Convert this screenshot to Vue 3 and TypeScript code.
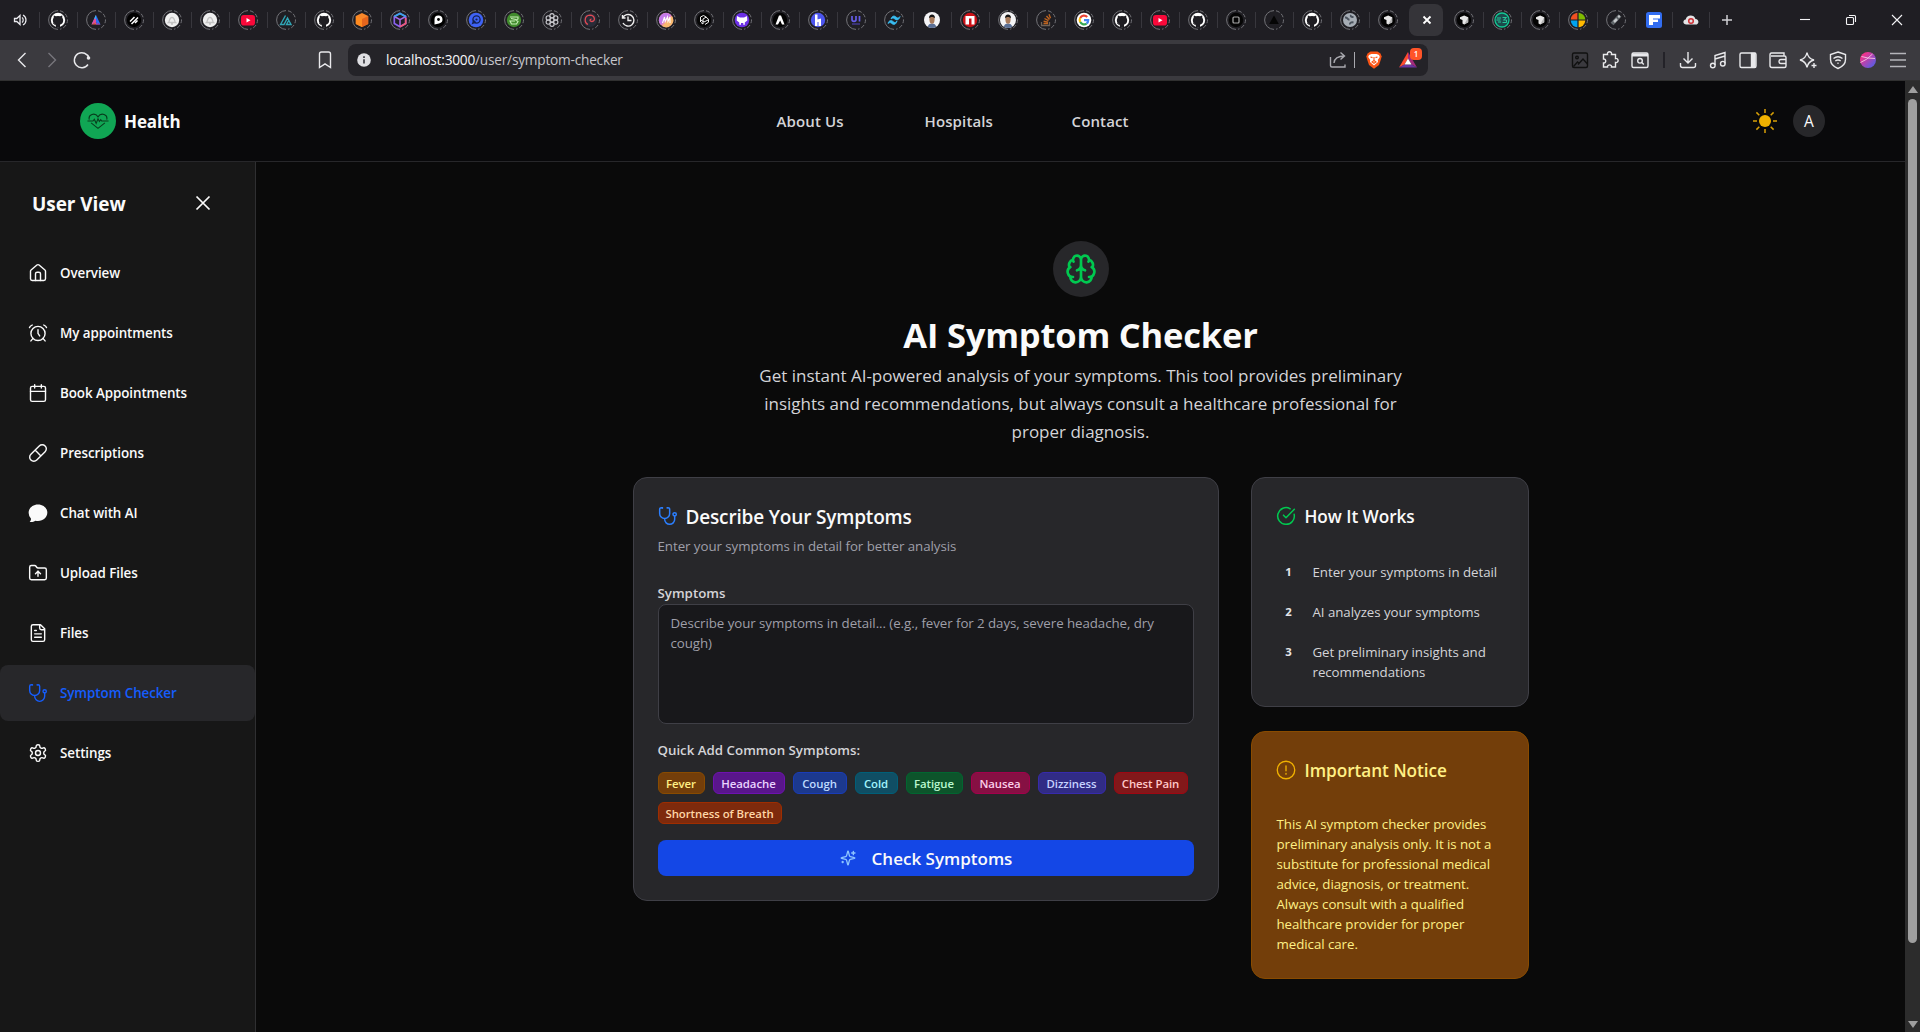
<script setup lang="ts">
interface Tab { icon: string; ring?: boolean; active?: boolean; narrow?: boolean }
interface Chip { label: string; tone: string; width: number }

const github = '<circle cx="10" cy="10" r="7.2" fill="#fff"/><path d="M8 17.300v-2.600c-2-.5-3.200-1.900-3.200-4.400 0-1.100.3-1.900.900-2.600l.1-2.200 2.100.8a8 8 0 0 1 4.200 0l2.100-.8.1 2.200c.6.700.9 1.500.9 2.600 0 2.500-1.200 3.900-3.200 4.400v2.600z" fill="#1f1e23"/><path d="M5.200 13.300c1 .2 1 1.700 3 1.500" stroke="#1f1e23" stroke-width=".9" fill="none"/>'
const youtube = '<rect x="3" y="5" width="14" height="10.500" rx="2.800" fill="#f9093a"/><path d="M8.500 8v4.500l4-2.250z" fill="#fff"/>'
const bell = '<circle cx="10" cy="10" r="7.200" fill="#efefef"/><path d="M6.500 12.500c1.300-1 .6-5 3.500-5.200 2.900.2 2.200 4.200 3.500 5.200zM9 14h2" stroke="#c4c4c4" stroke-width="1.300" fill="none"/>'
const cursor = '<circle cx="10" cy="10" r="7.200" fill="#030303"/><path d="M6 7.300 10.200 5.500l4 1.800v5L10.200 14.500 8.500 13.500V10L6 9z" fill="#e8e8e8"/><path d="m10.200 14.500 4-2.200V7.300z" fill="#b5b5b5"/>'
const portrait = '<circle cx="10" cy="10" r="8" fill="#f4f4f6"/><path d="M5.800 16.800c.5-2.500 2-3.300 4.200-3.300s3.700.8 4.200 3.300A8 8 0 0 1 5.800 16.800z" fill="#5b7096"/><ellipse cx="10" cy="9.500" rx="2.600" ry="4.200" fill="#a87b5c"/><path d="M7 8.500C6.500 3 13.500 3 13 8.500 12 6.500 8 6.500 7 8.500z" fill="#151515"/>'

const favicons: Record<string, string> = {
  speaker: '<path d="M4.500 8.500h2.300l3.200-3v9l-3.200-3H4.500z" fill="none" stroke="#ececf0" stroke-width="1.300"/><path d="M12 7.500c1.600 1.200 1.600 3.800 0 5M13 5c4 2.300 4 7.700 0 10" fill="none" stroke="#ececf0" stroke-width="1.200"/>',
  github, youtube, bell, cursor, portrait,
  prism: '<path d="M10 5 5.500 14.500l4.500-2z" fill="#19a7f5"/><path d="m10 5v7.500l-4.500 2z" fill="#e64a9b"/><path d="m10 5 4.500 9.500-4.500-2z" fill="#2b6df2"/><path d="M8.300 8.600 10 5v4z" fill="#27c0fa"/><path d="m5.500 14.500 4.500-2 4.500 2z" fill="#f4584a"/><path d="m10 12.500 4.500 2H10z" fill="#6a48e0"/>',
  slash: '<circle cx="10" cy="10" r="7.200" fill="#000"/><path d="m6 11.500 4.500-4.500M7.500 14l6.500-6.500M11 13l2.500-2.500" stroke="#fff" stroke-width="1.500"/>',
  delta: '<path d="M9.500 5.500 4.500 14.500h3.500l3.500-6.500 3.500 6.500h-4.500l2.200-4" fill="none" stroke="#30a5b5" stroke-width="1.400"/>',
  orange: '<path d="m10 3 6.200 3v8L10 17l-6.200-3V6z" fill="#f8872a"/><path d="m10 9 6.200-3v8L10 17z" fill="#e5651d"/><path d="m3.800 6 6.200 3v8l-6.200-3z" fill="#ff8b20"/>',
  cube: '<path d="m10 3.500 5.700 3v7L10 16.700l-5.700-3.200v-7z" fill="none" stroke="#8a63ef" stroke-width="1.700"/><path d="M4.300 6.500 10 9.700l5.700-3.200M10 9.700v7" fill="none" stroke="#a868e6" stroke-width="1.500"/><path d="M4.300 6.500 10 3.500l5.700 3" fill="none" stroke="#38a8e8" stroke-width="1.700"/><path d="M15.700 8v5.500L10 16.700" fill="none" stroke="#ef5a78" stroke-width="1.700"/>',
  peer: '<circle cx="10" cy="10" r="7.200" fill="#000"/><path d="M6.500 14.500v-5A4 4 0 1 1 11 13.400z" fill="#fff"/><circle cx="10.500" cy="9.500" r="1.400" fill="#000"/>',
  compass: '<circle cx="10" cy="10" r="7.300" fill="#3f63f5"/><circle cx="10.500" cy="9.500" r="3.600" fill="none" stroke="#142253" stroke-width="1.300"/><path d="M5.500 14.500 7.500 9.500l3 3z" fill="#142253"/><circle cx="10.500" cy="9.500" r="1.100" fill="#142253"/>',
  leaf: '<circle cx="10" cy="10" r="7.200" fill="#418b2d"/><path d="M6 7h8v2l-2 1 2 1.500-1.500 2.500H7.500L6 11h5M7 8.500l5 1" fill="none" stroke="#c8efb8" stroke-width="1.100"/>',
  rosette: '<g fill="none" stroke="#c9c9ce" stroke-width="1.100"><circle cx="10" cy="10" r="2"/><circle cx="10" cy="5.700" r="2.100"/><circle cx="13.800" cy="7.900" r="2.100"/><circle cx="13.800" cy="12.100" r="2.100"/><circle cx="10" cy="14.300" r="2.100"/><circle cx="6.200" cy="12.100" r="2.100"/><circle cx="6.200" cy="7.900" r="2.100"/></g>',
  swirl: '<circle cx="10" cy="10" r="7" fill="#292c38"/><path d="M8 14.500C4 12.500 4 5.500 10 5.200c5 0 5.800 6 2 6.300-2.800 0-2.200-2.600-.5-2.300" fill="none" stroke="#df4a54" stroke-width="1.300"/>',
  history: '<path d="M4.500 5v3h3M4.800 8A5.800 5.800 0 1 1 5 13M10 6.500v4h3.500" fill="none" stroke="#eee" stroke-width="1.400"/>',
  mono: '<circle cx="10" cy="10" r="7.200" fill="#ef8fab"/><path d="M3.200 8A7.200 7.200 0 0 1 15 5L5 15a7 7 0 0 1-1.800-7z" fill="#c47bea"/><path d="M6 16l10-10a7.200 7.200 0 0 1-10 10z" fill="#f8b96f"/><path d="m6.500 13 2-6 .7 4.500 2.300-4.500.5 4.500 2-4.500v6" stroke="#fff" stroke-width="1.100" fill="none"/>',
  knot: '<circle cx="10" cy="10" r="7.200" fill="#060606"/><path d="M6.500 12V7l3-1.500 3 1.700M6 9.500l4 2.500 4-2M9 14V9l3-1.800 2.500 2v3L11 14.500M7 12.500l2 1.500" fill="none" stroke="#f1f1f1" stroke-width="1"/>',
  ghost: '<circle cx="10" cy="10" r="7.300" fill="#6c30e6"/><path d="M5 6 8 7.500h4L15 6l.3 4.500-2.500 2v2.300h-1.500V13H9v1.800H7.300v-2.300L4.700 10.500z" fill="#fff"/>',
  peak: '<circle cx="10" cy="10" r="7.200" fill="#030303"/><path d="m5.500 14.500 3.500-9h2l3.500 9h-2.500l-1.800-4-2.200 4z" fill="#fff"/>',
  chair: '<circle cx="10" cy="10" r="7.200" fill="#4c55ee"/><path d="M7 4.500h2.500v5L13 8.500V16h-2.500v-4h-1v4H7z" fill="#fff"/>',
  uikit: '<path d="M6 6v3.500c0 2.500 4 2.500 4 0V6M13.500 6v5.500" fill="none" stroke="#655de8" stroke-width="1.700"/><path d="M6 14h8" stroke="#443c96" stroke-width="1.400"/>',
  wind: '<path d="M7 9C8 5.500 10.500 5.500 12 7s2.500 1.500 4-.5c-1 4-3.500 4-5.300 2.400C9.500 7.900 8.500 7.700 7 9zM4 13.500c1-3.500 3.500-3.500 5-2s2.500 1.500 4-.5c-1 4-3.500 4-5.300 2.400-1.200-1-2.200-1.200-3.700.1z" fill="#38bdf2" stroke="#38bdf2" stroke-width=".8"/>',
  npm: '<circle cx="10" cy="10" r="7.200" fill="#cc1117"/><path d="M5.500 6h9v8.500h-3V8.500H9v6H5.500z" fill="#fff"/>',
  stack: '<path d="M5.500 12v3.500h8V12" fill="none" stroke="#6e6259" stroke-width="1.300"/><path d="M7.500 13.500h4.500M7.600 11.300l4.500.8M8.500 8.500l4 2.200M10.500 6l3 3.500M13 4.200l1.500 4" stroke="#c0641f" stroke-width="1.400"/>',
  google: '<circle cx="10" cy="10" r="7.300" fill="#fff"/><g fill="none" stroke-width="2.200"><path d="M13.200 7A4.300 4.300 0 0 0 6.200 8" stroke="#ea4335"/><path d="M6.200 8a4.300 4.300 0 0 0 0 4.100" stroke="#fbbc05"/><path d="M6.200 12.100a4.300 4.300 0 0 0 6.500 1.400" stroke="#34a853"/><path d="M12.700 13.500a4.300 4.300 0 0 0 1.500-3.300H10" stroke="#4285f4"/></g>',
  square: '<circle cx="10" cy="10" r="7.200" fill="#050505"/><rect x="7" y="7" width="6" height="6" rx="1" fill="none" stroke="#aaa" stroke-width="1.200"/>',
  triangle: '<path d="m10 5.500 4.800 8.500H5.200z" fill="#050505"/>',
  globe: '<circle cx="10" cy="10" r="7" fill="#a6adb5"/><path d="M5 7.500c2.500-.5 2 2 4.500 2.200M11 5c-1 1.500 1 2 2.500 2M10 14.500c-.5-2 1.500-2.500 3.500-2" fill="none" stroke="#4b535d" stroke-width="1.900"/>',
  circuit: '<circle cx="10" cy="10" r="7" fill="#1c4a4c" stroke="#12c894" stroke-width="1.300"/><path d="M5 8h4M4.500 10h4M6 12h3M10.500 7.500h4l-3 2.500h3v2.500h-4" fill="none" stroke="#2ad5a3" stroke-width=".9"/>',
  windows: '<path d="M9.400 9.400V2.700A7.300 7.300 0 0 0 2.700 9.400z" fill="#f25022"/><path d="M10.600 9.400V2.700a7.300 7.300 0 0 1 6.700 6.700z" fill="#7fba00"/><path d="M9.400 10.600v6.700a7.300 7.300 0 0 1-6.700-6.700z" fill="#00a4ef"/><path d="M10.600 10.600v6.700a7.300 7.300 0 0 0 6.700-6.700z" fill="#ffb900"/>',
  pen: '<path d="m6 14 8-8.500" stroke="#60666a" stroke-width="4"/><path d="m8 12 3-3" stroke="#c6c9cb" stroke-width="2.500"/><circle cx="13" cy="6.500" r="1.200" fill="#c6c9cb"/>',
  form: '<rect x="2" y="2" width="16" height="16" rx="2.500" fill="#326df0"/><path d="M5 5h11v3.500H9v1h5V12H9v3H5z" fill="#fff"/>',
  cloud: '<path d="M5.500 14.500c-4 0-4-4.500-.8-5 .8-5.200 8.500-5.500 9.800-.6 4 .4 3.800 5.600 0 5.600z" fill="#e4e4e6"/><circle cx="10" cy="11" r="2.300" fill="none" stroke="#cf2f34" stroke-width="1.500"/>',
}

const names = [
  'github', 'prism', 'slash', 'bell', 'bell', 'youtube', 'delta', 'github', 'orange', 'cube', 'peer', 'compass',
  'leaf', 'rosette', 'swirl', 'history', 'mono', 'knot', 'ghost', 'peak', 'chair', 'uikit', 'wind', 'portrait',
  'npm', 'portrait', 'stack', 'google', 'github', 'youtube', 'github', 'square', 'triangle', 'github', 'globe',
  'cursor', 'close', 'cursor', 'circuit', 'cursor', 'windows', 'pen', 'form', 'cloud',
]
const tabs: Tab[] = names.map((icon, i) => ({
  icon,
  ring: i !== 23 && icon !== 'form' && icon !== 'cloud' && icon !== 'close',
  active: icon === 'close',
  narrow: icon === 'form' || icon === 'cloud',
}))

const stethoscope = '<path d="M4.800 2.300A.3.300 0 1 0 5 2H4a2 2 0 0 0-2 2v5a6 6 0 0 0 12 0V4a2 2 0 0 0-2-2h-1a.2.200 0 1 0 .3.300M8 15v1a6 6 0 0 0 12 0v-4"/><circle cx="20" cy="10" r="2"/>'
const menu = [
  { label: 'Overview', icon: '<path d="M3 10a2 2 0 0 1 .7-1.500l7-6a2 2 0 0 1 2.600 0l7 6A2 2 0 0 1 21 10v9a2 2 0 0 1-2 2H5a2 2 0 0 1-2-2z"/><path d="M9 21v-8a2 2 0 0 1 2-2h2a2 2 0 0 1 2 2v8"/>' },
  { label: 'My appointments', icon: '<circle cx="12" cy="12.500" r="8.500"/><path d="M12 8v4.500l2 3M1.800 5.500C2.300 4 3.500 3 5 2.500M22.200 5.500C21.700 4 20.500 3 19 2.500M6 18.500l-2.500 3M18 18.500l2.500 3"/>' },
  { label: 'Book Appointments', icon: '<path d="M8 2v4M16 2v4M3 10h18"/><rect x="3" y="4" width="18" height="18" rx="2"/>' },
  { label: 'Prescriptions', icon: '<path d="m10.500 20.500 10-10a4.950 4.950 0 1 0-7-7l-10 10a4.950 4.950 0 1 0 7 7zM8.500 8.500l7 7"/>' },
  { label: 'Chat with AI', icon: '<path d="M12 1.700c6.400 0 11.200 4.300 11.200 9.800S18.400 21.500 12 21.500c-1 0-2 0-3-.3-2 1.300-4.500 2-7 1.500 1.300-1.200 1.700-2.700 1.500-4.200A9.300 9.300 0 0 1 .8 11.500c0-5.500 4.800-9.800 11.200-9.800z" fill="currentColor" stroke="none"/>' },
  { label: 'Upload Files', icon: '<path d="M20 20a2 2 0 0 0 2-2V8a2 2 0 0 0-2-2h-7.900a2 2 0 0 1-1.700-.9L9.600 3.900A2 2 0 0 0 7.900 3H4a2 2 0 0 0-2 2v13a2 2 0 0 0 2 2z"/><path d="M12 9.500v6.500M9 13l3-3 3 3"/>' },
  { label: 'Files', icon: '<path d="M15 2H6a2 2 0 0 0-2 2v16a2 2 0 0 0 2 2h12a2 2 0 0 0 2-2V7zM14 2v4a2 2 0 0 0 2 2h4M10 9H8M16 13H8M16 17H8"/>' },
  { label: 'Symptom Checker', icon: stethoscope, active: true },
  { label: 'Settings', icon: '<path d="M12.220 2h-.44a2 2 0 0 0-2 2v.18a2 2 0 0 1-1 1.730l-.43.250a2 2 0 0 1-2 0l-.15-.08a2 2 0 0 0-2.730.730l-.22.380a2 2 0 0 0 .73 2.730l.15.100a2 2 0 0 1 1 1.720v.510a2 2 0 0 1-1 1.740l-.15.090a2 2 0 0 0-.73 2.730l.22.380a2 2 0 0 0 2.730.730l.15-.08a2 2 0 0 1 2 0l.43.250a2 2 0 0 1 1 1.730V20a2 2 0 0 0 2 2h.440a2 2 0 0 0 2-2v-.18a2 2 0 0 1 1-1.730l.43-.25a2 2 0 0 1 2 0l.15.080a2 2 0 0 0 2.730-.73l.22-.39a2 2 0 0 0-.73-2.730l-.15-.08a2 2 0 0 1-1-1.740v-.5a2 2 0 0 1 1-1.740l.15-.09a2 2 0 0 0 .73-2.730l-.22-.38a2 2 0 0 0-2.730-.73l-.15.080a2 2 0 0 1-2 0l-.43-.25a2 2 0 0 1-1-1.730V4a2 2 0 0 0-2-2z"/><circle cx="12" cy="12" r="3"/>' },
]

const chips: Chip[] = [
  { label: 'Fever', tone: 'yellow', width: 47 },
  { label: 'Headache', tone: 'purple', width: 72 },
  { label: 'Cough', tone: 'blue', width: 54 },
  { label: 'Cold', tone: 'cyan', width: 43 },
  { label: 'Fatigue', tone: 'green', width: 57 },
  { label: 'Nausea', tone: 'pink', width: 59 },
  { label: 'Dizziness', tone: 'indigo', width: 68 },
  { label: 'Chest Pain', tone: 'red', width: 74 },
  { label: 'Shortness of Breath', tone: 'orange', width: 124 },
]
const steps = [['Enter your symptoms in detail'], ['AI analyzes your symptoms'], ['Get preliminary insights and', 'recommendations']]
const notice = [
  'This AI symptom checker provides', 'preliminary analysis only. It is not a', 'substitute for professional medical',
  'advice, diagnosis, or treatment.', 'Always consult with a qualified', 'healthcare provider for proper', 'medical care.',
]
const toolbarIcons = [
  { cls: 'dark', svg: '<rect x="2.500" y="3" width="15" height="14.500" rx="1.500"/><circle cx="7" cy="7.500" r="1.300"/><path d="m3.500 16.500 4-4.500 2 1.500M8 14.500l5-5.500 4.500 5"/>' },
  { cls: 'puzzle', svg: '<path d="M3.500 4.500h4c-1-3.700 5-3.700 4 0h4v4c3.500-.8 3.500 4.800 0 4v4.500h-4c.8-2.800-4.500-2.800-4 0h-4v-4c3 .5 3-4.500 0-4z"/>' },
  { cls: 'find', svg: '<rect x="2" y="3" width="16" height="14.500" rx="1.500"/><path d="M2 5h16" stroke-width="3"/><circle cx="10" cy="10.800" r="2.300"/><path d="m11.800 12.600 2 2"/>' },
  { cls: 'sep', svg: '' },
  { cls: '', svg: '<path d="M10 2v10.500M5.500 8.500 10 13l4.500-4.500M2.500 13v2.500q0 2 2 2h11q2 0 2-2V13"/>' },
  { cls: '', svg: '<path d="M7 15V5.500l10-3v11M7 9l10-3"/><circle cx="4.800" cy="15.500" r="2.300"/><circle cx="14.800" cy="13.700" r="2.300"/>' },
  { cls: '', svg: '<rect x="2" y="3" width="16" height="14.500" rx="1.500"/><path d="M13.500 3.500h3.500v13.500h-3.500z" fill="currentColor"/>' },
  { cls: '', svg: '<path d="M16 6V3H3.500Q2 3 2 5v10.500q0 2 2 2h12.500q1.500 0 1.500-1.500V7.500Q18 6 16.500 6H3M18 9.500h-5q-2 0-2 2t2 2h5"/>' },
  { cls: '', svg: '<path d="M9 2.500q1 6 7 7.500-6 1.500-7 7.500Q8 11.500 2 10 8 8.500 9 2.500zM16 13v5M13.500 15.500h5"/>' },
  { cls: '', svg: '<path d="M10 2l7.500 2.500v5q0 6-7.500 9-7.500-3-7.500-9v-5z"/><path d="M5.500 8.500q4.500-3.500 9 0M7.300 11q2.700-2 5.400 0M9.400 13.300h1.200"/>' },
]
</script>

<template>
  <div class="window">
    <div class="tabstrip">
      <div class="tab first"><svg viewBox="0 0 20 20" v-html="favicons.speaker" /></div>
      <div v-for="(t, i) in tabs" :key="i" class="tab" :class="{ active: t.active, narrow: t.narrow, plain: t.active || tabs[i - 1]?.active }">
        <svg v-if="t.active" viewBox="0 0 20 20"><path d="m6.500 6.500 7 7m0-7-7 7" stroke="#fff" stroke-width="1.800" /></svg>
        <svg v-else viewBox="0 0 20 20">
          <g v-if="t.ring" fill="none" stroke="#737378" stroke-width="1">
            <path d="M10 .6A9.400 9.400 0 0 0 10 19.400" />
            <path d="M12 .8A9.400 9.400 0 0 1 12 19.200" stroke-dasharray="4 2" />
          </g>
          <g v-html="favicons[t.icon]" />
        </svg>
      </div>
      <div class="tab plus"><svg viewBox="0 0 20 20"><path d="M10 5v10M5 10h10" stroke="#d0d0d4" stroke-width="1.500" /></svg></div>
      <div class="controls">
        <svg viewBox="0 0 20 20"><path d="M5 9.500h10" /></svg>
        <svg viewBox="0 0 20 20"><rect x="5.500" y="7.500" width="7" height="7" rx="1" /><path d="M8 5.500h5.500q1 0 1 1V12" /></svg>
        <svg viewBox="0 0 20 20"><path d="m5 5 10 10M15 5 5 15" /></svg>
      </div>
    </div>

    <div class="toolbar">
      <div class="history">
        <svg viewBox="0 0 20 20"><path d="m13.500 3-7 7 7 7" /></svg>
        <svg viewBox="0 0 20 20" class="dim"><path d="m6.500 3 7 7-7 7" /></svg>
        <svg viewBox="0 0 20 20"><path d="M17 8A7.500 7.500 0 1 0 16 14.500" /><circle cx="16.500" cy="8" r="1.800" fill="currentColor" stroke="none" /></svg>
      </div>
      <svg class="bookmark" viewBox="0 0 20 20"><path d="M4.500 4q0-2 2-2h7q2 0 2 2v13.500L10 13.800l-5.500 3.700z" /></svg>
      <div class="address">
        <svg class="info" viewBox="0 0 14 14"><circle cx="7" cy="7" r="6.800" /><path d="M6.200 6.200h1.600v4.300H6.200zM6.200 3.300h1.600v1.600H6.200z" fill="#34343a" /></svg>
        <span class="url"><b>localhost:3000</b>/user/symptom-checker</span>
        <svg class="share" viewBox="0 0 20 20"><path d="M2.500 7v8.500q0 1.500 1.500 1.500h13v-2.500M6 13c.5-5 4-7 10.500-7M12.500 2.500 16.500 6l-4 3.500" /></svg>
        <i class="bar" />
        <svg class="brave" viewBox="0 0 16 18"><path d="m4.500.5-3 2L.3 5.500l1 3.500L3 14l5 3.800L13 14l1.700-5 1-3.500-1.200-3-3-2z" fill="#fb5415" /><path d="m3 4 2.500-1h5L13 4l.8 2-2 3 .2 2-4 3.500L4 11l.2-2-2-3z" fill="#fff" /><path d="m4.500 6 2 .6M11.500 6l-2 .6M8 6v3.500L6 11l2 1.300 2-1.300-2-1.500" fill="none" stroke="#fb5415" stroke-width="1.100" /></svg>
        <div class="bat">
          <svg viewBox="0 0 20 18"><path d="M10 1 1 16.500l5.500-3L10 7.500z" fill="#ff4b2f" /><path d="m10 1 9 15.500-5.500-3L10 7.500z" fill="#a22a7c" /><path d="m1 16.500 5.500-3h7l5.500 3z" fill="#6b35a0" /><path d="m10 7.500-3.500 6h7z" fill="#fff" /></svg>
          <span>1</span>
        </div>
      </div>
      <div class="actions">
        <template v-for="(t, i) in toolbarIcons" :key="i">
          <i v-if="t.cls === 'sep'" />
          <svg v-else :class="t.cls" viewBox="0 0 20 20" v-html="t.svg" />
        </template>
        <svg viewBox="0 0 20 20" class="orb">
          <defs><linearGradient id="orb" x1="0" y1="0" x2="1" y2="1"><stop offset=".2" stop-color="#f0338c" /><stop offset=".8" stop-color="#6858dc" /></linearGradient></defs>
          <circle cx="10" cy="10" r="8" fill="url(#orb)" stroke="none" /><path d="M3.500 6.500q6 2 13.500 2M2.500 12.500Q9 10 14.500 4" stroke="#f3b8df" stroke-width="1" />
        </svg>
        <svg viewBox="0 0 20 20" class="burger"><path d="M2 3.500h16M2 10h16M2 16.500h16" /></svg>
      </div>
    </div>

    <div class="viewport">
      <div class="page">
        <header>
          <div class="brand">
            <span class="logo"><svg viewBox="0 0 24 18"><path d="M2.500 7C1 1.500 8.500-1.500 12 4c3.500-5.500 11-2.500 9.500 3M4.500 10.500l7.500 6 7.500-6M.5 8.500h6l1.500-2 2 4.500 2-5 1.500 3 1.500-2 1 1.500h7.500" /></svg></span>
            <strong>Health</strong>
          </div>
          <nav><a class="n1">About Us</a><a class="n2">Hospitals</a><a class="n3">Contact</a></nav>
          <div class="account">
            <svg viewBox="0 0 24 24"><circle cx="12" cy="12" r="6" fill="#f0b100" /><path d="M12 0v4M12 20v4M0 12h4M20 12h4M3.400 3.400 6.300 6.300M17.700 17.700l2.900 2.900M3.400 20.600l2.900-2.900M17.700 6.300l2.900-2.900" stroke="#d79f07" stroke-width="1.500" /></svg>
            <span>A</span>
          </div>
        </header>
        <div class="body">
          <aside>
            <div class="side-head">
              <h2>User View</h2>
              <svg viewBox="0 0 24 24"><path d="m5.500 5.500 13 13M18.500 5.500l-13 13" /></svg>
            </div>
            <ul>
              <li v-for="m in menu" :key="m.label" :class="{ active: m.active }">
                <svg viewBox="0 0 24 24" v-html="m.icon" /><span>{{ m.label }}</span>
              </li>
            </ul>
          </aside>
          <main>
            <div class="brain">
              <svg viewBox="0 0 24 24"><path d="M12 18V5M15 13a4.170 4.170 0 0 1-3-4 4.170 4.170 0 0 1-3 4M17.598 6.500A3 3 0 1 0 12 5a3 3 0 1 0-5.598 1.500M17.997 5.125a4 4 0 0 1 2.526 5.770M18 18a4 4 0 0 0 2-7.464M19.967 17.483A4 4 0 1 1 12 18a4 4 0 1 1-7.967-.517M6 18a4 4 0 0 1-2-7.464M6.003 5.125a4 4 0 0 0-2.526 5.770" /></svg>
            </div>
            <h1>AI Symptom Checker</h1>
            <p class="lead">Get instant AI-powered analysis of your symptoms. This tool provides preliminary<br>insights and recommendations, but always consult a healthcare professional for<br>proper diagnosis.</p>
            <div class="columns">
              <section class="card form">
                <h3 class="form-title"><svg viewBox="0 0 24 24" v-html="stethoscope" />Describe Your Symptoms</h3>
                <p class="hint">Enter your symptoms in detail for better analysis</p>
                <label>Symptoms</label>
                <div class="textarea">Describe your symptoms in detail... (e.g., fever for 2 days, severe headache, dry<br>cough)</div>
                <p class="quick">Quick Add Common Symptoms:</p>
                <div class="chips">
                  <span v-for="c in chips" :key="c.label" :class="c.tone" :style="{ width: c.width + 'px' }">{{ c.label }}</span>
                </div>
                <button>
                  <svg viewBox="0 0 24 24"><path d="M9.900 15.500A2 2 0 0 0 8.500 14.100L2.400 12.500a.5.500 0 0 1 0-1L8.500 9.900A2 2 0 0 0 9.900 8.500l1.600-6.100a.5.500 0 0 1 1 0l1.600 6.100a2 2 0 0 0 1.400 1.400l6.100 1.600a.5.500 0 0 1 0 1l-6.100 1.600a2 2 0 0 0-1.400 1.400l-1.600 6.100a.5.500 0 0 1-1 0zM20 2v5M22.500 4.500h-5M4 17v2M5 18H3" /></svg>
                  <span>Check Symptoms</span>
                </button>
              </section>
              <div class="right">
                <section class="card how">
                  <h3><svg viewBox="0 0 24 24"><path d="M21.801 10A10 10 0 1 1 17 3.335M9 11l3 3L22 4" /></svg><span>How It Works</span></h3>
                  <div v-for="(s, i) in steps" :key="i" class="step">
                    <b>{{ i + 1 }}</b>
                    <div><p v-for="line in s" :key="line">{{ line }}</p></div>
                  </div>
                </section>
                <section class="card notice">
                  <h3><svg viewBox="0 0 24 24"><circle cx="12" cy="12" r="10.500" /><path d="M12 7v6M12 16v1" /></svg><span>Important Notice</span></h3>
                  <p v-for="line in notice" :key="line">{{ line }}</p>
                </section>
              </div>
            </div>
          </main>
        </div>
      </div>
      <div class="scrollbar"><i class="up" /><i class="thumb" /><i class="down" /></div>
    </div>
  </div>
</template>

<style>
body { margin: 0; background: #0a0a0a; overflow: hidden; }
</style>

<style scoped>
* { box-sizing: border-box; }
h1, h2, h3, p, ul { margin: 0; padding: 0; }
svg { display: block; fill: none; flex: none; }
.window { width: 1920px; height: 1032px; display: flex; flex-direction: column; font-family: "Open Sans", "Noto Sans", sans-serif; color: #fafafa; overflow: hidden; }

.tabstrip { height: 40px; background: #1f1e23; display: flex; align-items: center; flex: none; }
.tab { width: 38px; height: 16px; display: flex; align-items: center; justify-content: center; border-left: 1px solid #38373d; flex: none; padding-right: 1px; }
.tab svg { width: 20px; height: 20px; }
.tab.first { width: 39px; border: 0; padding: 0; }
.tab.narrow { width: 37px; }
.tab.plain { border-color: transparent; }
.tab.active { width: 34px; margin: 0 2px; height: 32px; background: #353439; border: 0; border-radius: 8px; padding: 0 0 0 1px; }
.tab.plus { width: 36px; padding: 0 1px 0 0; }
.controls { display: flex; gap: 26px; margin-left: 50px; }
.controls svg { width: 20px; height: 20px; stroke: #f4f4f6; stroke-width: 1.1; }

.toolbar { height: 41px; background: #3b3a3f; border-bottom: 1px solid #303030; display: flex; align-items: center; flex: none; color: #e9e9ec; }
.toolbar svg { stroke: currentColor; stroke-width: 1.4; }
.history { display: flex; gap: 10px; padding-left: 12px; width: 315px; }
.history svg, .bookmark { width: 20px; height: 20px; }
.history .dim { color: #77767c; }
.address { margin-left: 13px; width: 1080px; height: 32px; background: #242328; border-radius: 8px; display: flex; align-items: center; }
.toolbar .info { width: 14px; height: 14px; margin-left: 9px; fill: #dfdfe3; stroke: none; }
.url { margin-left: 15px; flex: 1; font-size: 13.7px; letter-spacing: -0.23px; line-height: 20px; color: #c6c6cb; }
.url b { font-weight: 400; color: #f6f6f8; }
.share { width: 20px; height: 20px; color: #a9a9af; }
.bar { width: 1px; height: 16px; background: #a9a9af; margin-left: 6px; }
.toolbar .brave { width: 16px; height: 18px; margin-left: 11px; stroke: none; }
.bat { position: relative; margin: 0 10px 0 16px; }
.toolbar .bat svg { width: 20px; height: 18px; stroke: none; }
.bat span { position: absolute; left: 12px; top: -3px; width: 12px; height: 12px; border-radius: 4px; background: #ff5428; color: #fff; font-size: 8px; line-height: 12px; text-align: center; font-weight: 600; }
.actions { display: flex; align-items: center; gap: 10px; margin-left: 142px; }
.actions svg { width: 20px; height: 20px; }
.actions .dark { color: #111; }
.actions i { width: 2px; height: 16px; background: #232228; margin: 0 3px; }
.burger { color: #b5b5ba; }

.viewport { flex: 1; display: flex; min-height: 0; }
.page { width: 1905px; display: flex; flex-direction: column; }
header { height: 81px; background: #09090b; border-bottom: 1px solid #27272a; display: flex; align-items: center; flex: none; padding: 0 80px; justify-content: space-between; }
.brand { display: flex; align-items: center; gap: 8px; width: 200px; }
.logo { width: 36px; height: 36px; border-radius: 50%; background: #10a654; display: flex; align-items: center; justify-content: center; }
.logo svg { width: 22px; height: 17px; stroke: #083c1d; stroke-width: 1.2; }
.brand strong { font-size: 17px; line-height: 28px; padding-top: 2px; letter-spacing: -0.1px; }
nav { display: flex; font-weight: 600; font-size: 15px; letter-spacing: 0.13px; line-height: 24px; color: #d4d4d8; }
nav a { white-space: nowrap; }
nav .n1 { width: 148px; }
nav .n2 { width: 147px; }
nav .n3 { width: 57px; }
.account { width: 200px; display: flex; gap: 16px; align-items: center; justify-content: flex-end; }
.account svg { width: 24px; height: 24px; }
.account span { width: 32px; height: 32px; border-radius: 50%; background: #27272a; display: flex; align-items: center; justify-content: center; font-size: 15.500px; }

.body { flex: 1; display: flex; min-height: 0; }
aside { width: 256px; background: #171717; border-right: 1px solid #2f2f31; flex: none; }
.side-head { height: 83px; display: flex; justify-content: space-between; padding: 29px 40px 0 32px; }
h2 { font-size: 19px; letter-spacing: -0.07px; line-height: 26px; font-weight: 700; }
.side-head svg { width: 24px; height: 24px; stroke: #fafafa; stroke-width: 1.7; }
ul { list-style: none; }
li { height: 56px; margin-bottom: 4px; border-radius: 8px; padding-left: 28px; display: flex; align-items: center; gap: 12px; font-size: 13.4px; letter-spacing: -0.08px; line-height: 20px; font-weight: 600; }
li svg { width: 20px; height: 20px; stroke: currentColor; stroke-width: 1.7; stroke-linecap: round; stroke-linejoin: round; }
li.active { background: #27272a; color: #155dfc; }

main { flex: 1; background: #0a0a0a; padding-top: 79px; display: flex; flex-direction: column; align-items: center; }
.brain { width: 56px; height: 56px; border-radius: 50%; background: #27272a; display: flex; align-items: center; justify-content: center; }
.brain svg { width: 32px; height: 32px; stroke: #00c950; stroke-width: 2; stroke-linecap: round; stroke-linejoin: round; }
h1 { margin-top: 18px; font-size: 34.500px; letter-spacing: -0.2px; line-height: 40px; font-weight: 700; white-space: nowrap; }
.lead { margin-top: 7px; text-align: center; font-size: 17px; line-height: 28px; color: #d4d4d8; white-space: nowrap; }
.columns { margin-top: 31px; display: flex; gap: 32px; width: 896px; align-items: flex-start; }
.card { background: #27272a; border: 1px solid #3f3f46; border-radius: 14px; padding: 24px; }
.form { width: 586px; height: 424px; flex: none; }
.right { width: 278px; display: flex; flex-direction: column; gap: 24px; }
h3 { display: flex; align-items: center; gap: 8px; font-size: 19px; line-height: 30px; font-weight: 600; color: #fafafa; white-space: nowrap; }
h3 svg { width: 20px; height: 20px; stroke-linecap: round; stroke-linejoin: round; stroke-width: 1.8; }
.form-title { letter-spacing: -0.17px; }
.form-title svg { stroke: #2b7fff; margin-top: -3px; }
.hint { margin-top: 4px; font-size: 13.3px; letter-spacing: -0.05px; line-height: 20px; color: #9f9fa9; }
label { display: block; margin-top: 27px; font-size: 13.3px; line-height: 20px; font-weight: 600; color: #d4d4d8; }
.textarea { margin-top: 1px; height: 120px; background: #18181b; border: 1px solid #3f3f46; border-radius: 8px; padding: 8px 12px; font-size: 13.3px; letter-spacing: -0.06px; line-height: 20px; color: #9f9fa9; white-space: nowrap; }
.quick { margin-top: 16px; font-size: 13.3px; line-height: 20px; font-weight: 600; color: #d4d4d8; }
.chips { margin-top: 12px; display: flex; flex-wrap: wrap; gap: 8px; }
.chips span { height: 22px; border: 1px solid; border-radius: 6px; font-size: 11.400px; letter-spacing: -0.05px; padding-left: 0; line-height: 21px; font-weight: 600; text-align: center; white-space: nowrap; }
.chips .yellow { background: #733e0a; border-color: #894b00; color: #fff085; }
.chips .purple { background: #59168b; border-color: #6e11b0; color: #e9d4ff; }
.chips .blue { background: #1c398e; border-color: #193cb8; color: #bedbff; }
.chips .cyan { background: #104e64; border-color: #005f78; color: #a2f4fd; }
.chips .green { background: #0d542b; border-color: #016630; color: #b9f8cf; }
.chips .pink { background: #861043; border-color: #a3004c; color: #fccee8; }
.chips .indigo { background: #312c85; border-color: #372aac; color: #c6d2ff; }
.chips .red { background: #82181a; border-color: #9f0712; color: #ffc9c9; }
.chips .orange { background: #7e2a0c; border-color: #9f2d00; color: #ffd6a7; }
button { margin-top: 16px; width: 100%; height: 36px; border: 0; border-radius: 8px; background: #1447e6; color: #fafafa; font: 600 17px/28px "Open Sans", "Noto Sans", sans-serif; display: flex; align-items: center; justify-content: center; gap: 16px; padding: 0 0 0 1px; }
button span { padding-top: 1px; }
button svg { width: 16px; height: 16px; stroke: #8ec5ff; stroke-width: 2; stroke-linecap: round; stroke-linejoin: round; }
.how { height: 230px; }
.how h3, .notice h3 { line-height: 28px; font-size: 17.2px; height: 28px; gap: 9px; letter-spacing: -0.05px; }
.how h3 span, .notice h3 span { padding-top: 2px; }
.how h3 svg { stroke: #00c950; }
.step { display: flex; font-size: 13.3px; letter-spacing: -0.05px; line-height: 20px; color: #d4d4d8; margin-bottom: 20px; white-space: nowrap; }
.how h3 { margin-bottom: 32px; }
.step b { width: 24px; margin: 0 12px 0 1px; text-align: center; font-size: 11.400px; font-weight: 700; color: #e4e4e7; }
.notice { height: 248px; background: #733e0a; border-color: #894b00; }
.notice h3 { color: #fff085; margin-bottom: 30px; }
.notice h3 svg { stroke: #f0b100; stroke-width: 1.600; }
.notice p { font-size: 13.3px; letter-spacing: -0.05px; line-height: 20px; color: #fff085; white-space: nowrap; padding-left: 1px; }

.scrollbar { width: 15px; background: #2c2c2c; display: flex; flex-direction: column; align-items: center; }
.scrollbar i { flex: none; }
.up { margin-top: 5px; border: 5px solid transparent; border-top: 0; border-bottom: 7px solid #9f9f9f; }
.thumb { margin-top: 6px; width: 9px; height: 844px; background: #9f9f9f; border-radius: 5px; }
.down { margin-top: auto; margin-bottom: 4px; border: 5px solid transparent; border-bottom: 0; border-top: 7px solid #9f9f9f; }
</style>
